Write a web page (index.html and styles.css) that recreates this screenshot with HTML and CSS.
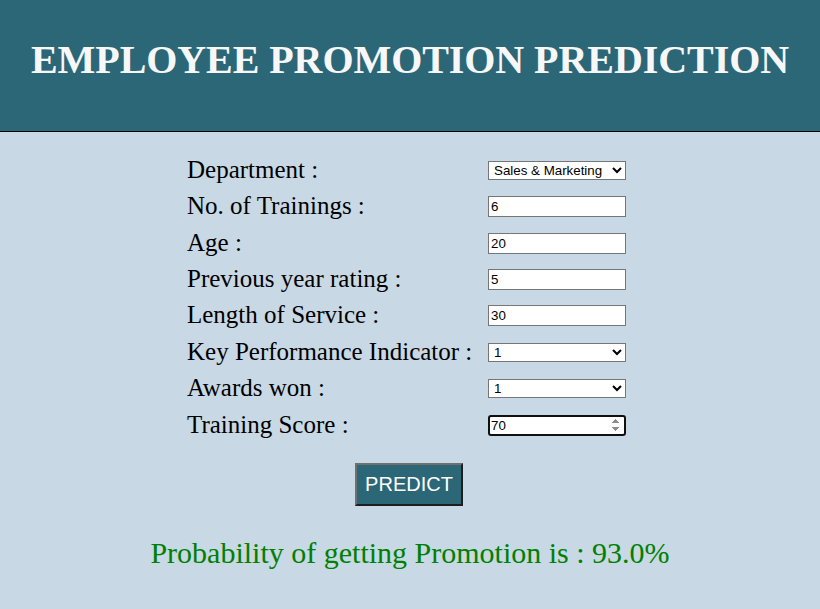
FILE: index.html
```
<!DOCTYPE html>
<html>
<head>
<meta charset="utf-8">
<title>Employee Promotion Prediction</title>
<link rel="stylesheet" href="styles.css">
</head>
<body>
<header class="banner">
  <h1 class="title">EMPLOYEE PROMOTION PREDICTION</h1>
</header>
<main class="content">
  <form class="form">
    <div class="grid">
      <label class="label">Department :</label>
      <select class="field sel"><option>Sales &amp; Marketing</option></select>
      <label class="label">No. of Trainings :</label>
      <input class="field txt" type="text" value="6">
      <label class="label">Age :</label>
      <input class="field txt" type="text" value="20">
      <label class="label">Previous year rating :</label>
      <input class="field txt" type="text" value="5">
      <label class="label">Length of Service :</label>
      <input class="field txt" type="text" value="30">
      <label class="label">Key Performance Indicator :</label>
      <select class="field sel"><option>1</option></select>
      <label class="label">Awards won :</label>
      <select class="field sel"><option>1</option></select>
      <label class="label">Training Score :</label>
      <input class="field txt num" type="number" value="70" autofocus>
    </div>
    <div class="actions">
      <button class="btn" type="button">PREDICT</button>
    </div>
  </form>
  <p class="result">Probability of getting Promotion is : 93.0%</p>
</main>
</body>
</html>
```
FILE: styles.css
```
html, body {
  margin: 0;
  padding: 0;
}
body {
  background: #c8d8e4;
  font-family: "Liberation Serif", "Times New Roman", serif;
  color: #000;
  width: 820px;
  height: 609px;
  overflow: hidden;
}
.banner {
  background: #2b6777;
  height: 131px;
  border-bottom: 1px solid #000;
  display: flex;
  align-items: center;
  justify-content: center;
}
.title {
  margin: 0;
  color: #f7f7f7;
  font-size: 40px;
  font-weight: bold;
  letter-spacing: -0.07px;
  padding-bottom: 12px;
}
.content {
  display: flex;
  flex-direction: column;
  align-items: center;
}
.form {
  display: flex;
  flex-direction: column;
  align-items: center;
  margin-top: 20px;
  padding-right: 7px;
}
.grid {
  display: grid;
  grid-template-columns: 301px 138px;
  grid-auto-rows: 36.43px;
  align-items: center;
}
.label {
  font-size: 25px;
  line-height: 28px;
  padding-bottom: 1px;
}
.field {
  box-sizing: border-box;
  width: 138px;
  font-family: "Liberation Sans", Arial, sans-serif;
  font-size: 13.33px;
  margin: 0;
}
.sel {
  height: 19px;
  border: 1px solid #767676;
  border-radius: 0;
  background: #fff;
  padding: 0 0 0 1px;
}
.txt {
  height: 21px;
  border: 1px solid #767676;
  padding: 1px 2px;
  background: #fff;
}
.num {
  border: 2px solid #101010;
  border-radius: 3px;
  padding: 0 1px;
  outline: none;
}
.actions {
  margin-top: 20px;
  padding-left: 5px;
}
.btn {
  background: #2b6777;
  color: #fff;
  font-family: "Liberation Sans", Arial, sans-serif;
  font-size: 20px;
  line-height: 23px;
  padding: 8px 8px;
  width: 108px;
  height: 43px;
  border-style: solid;
  border-width: 2px;
  border-color: #6f6f6f #1e1e1e #1e1e1e #6f6f6f;
}
.result {
  margin: 30px 0 0 0;
  color: #008000;
  font-size: 30px;
  line-height: 34px;
}
```
